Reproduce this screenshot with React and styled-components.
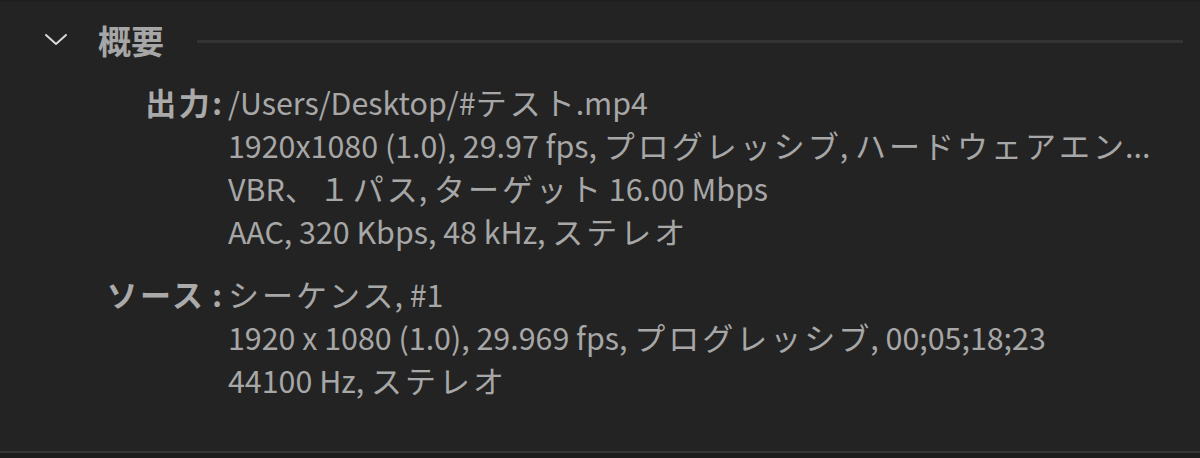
import React from "react";
import styled, { createGlobalStyle } from "styled-components";

const GlobalStyle = createGlobalStyle`
  html, body {
    margin: 0;
    padding: 0;
    background: #232323;
  }
`;

const Panel = styled.div`
  width: 1200px;
  height: 458px;
  box-sizing: border-box;
  background: #232323;
  border-top: 2px solid #1e1e1e;
  border-bottom: 5px solid #1c1c1c;
  box-shadow: inset 0 -2px 0 #343434;
  font-family: "Noto Sans CJK JP", "Noto Sans", sans-serif;
  color: #a9a9a9;
  overflow: hidden;
`;

const Header = styled.div`
  display: flex;
  align-items: center;
  height: 40px;
  padding: 18px 17px 0 44px;
`;

const Chevron = styled.svg`
  width: 24px;
  height: 14px;
  flex: none;
`;

const Title = styled.h2`
  margin: 0 0 0 30px;
  font-size: 33px;
  font-weight: 700;
  line-height: 40px;
  color: #a6a6a6;
`;

const Rule = styled.div`
  flex: 1;
  height: 3px;
  margin-left: 33px;
  margin-top: 2px;
  background: #333333;
`;

const Groups = styled.div`
  display: flex;
  flex-direction: column;
  gap: 20px;
  padding-top: 21px;
`;

const Group = styled.div`
  display: grid;
  grid-template-columns: 222px 1fr;
  column-gap: 6px;
`;

const Label = styled.div`
  text-align: right;
  font-size: 30px;
  font-weight: 700;
  height: 43px;
  line-height: 43px;
  color: #aaaaaa;
  white-space: pre;
`;

const Lines = styled.div`
  display: flex;
  flex-direction: column;
`;

const Line = styled.div`
  font-size: 30.4px;
  height: 43px;
  line-height: 43px;
  white-space: nowrap;
  color: #a7a7a7;
`;

const Kana = styled.span`
  font-size: 31px;
  line-height: 0;
  letter-spacing: ${(p) => (p.$bold ? 2.5 : 3)}px;
  margin-right: ${(p) => (p.$bold ? 0 : -2)}px;
`;

const JP = /([\u3000-\u30ff\u4e00-\u9fff\uff00-\uffef]+)/;

const Mixed = ({ text, bold }) =>
  text.split(JP).map((part, i) =>
    i % 2 ? (
      <Kana key={i} $bold={bold}>
        {part}
      </Kana>
    ) : (
      part
    )
  );

const groups = [
  {
    label: "出力:",
    lines: [
      "/Users/Desktop/#テスト.mp4",
      "1920x1080 (1.0), 29.97 fps, プログレッシブ, ハードウェアエン...",
      "VBR、１パス, ターゲット 16.00 Mbps",
      "AAC, 320 Kbps, 48 kHz, ステレオ",
    ],
  },
  {
    label: "ソース :",
    lines: [
      "シーケンス, #1",
      "1920 x 1080 (1.0), 29.969 fps, プログレッシブ, 00;05;18;23",
      "44100 Hz, ステレオ",
    ],
  },
];

export default function App() {
  return (
    <>
      <GlobalStyle />
      <Panel>
        <Header>
          <Chevron viewBox="0 0 24 14">
            <path
              d="M2 2 L12 11 L22 2"
              fill="none"
              stroke="#d8d8d8"
              strokeWidth="2"
              strokeLinecap="round"
              strokeLinejoin="round"
            />
          </Chevron>
          <Title>概要</Title>
          <Rule />
        </Header>
        <Groups>
          {groups.map((g) => (
            <Group key={g.label}>
              <Label>
                <Mixed text={g.label} bold />
              </Label>
              <Lines>
                {g.lines.map((l) => (
                  <Line key={l}>
                    <Mixed text={l} />
                  </Line>
                ))}
              </Lines>
            </Group>
          ))}
        </Groups>
      </Panel>
    </>
  );
}
